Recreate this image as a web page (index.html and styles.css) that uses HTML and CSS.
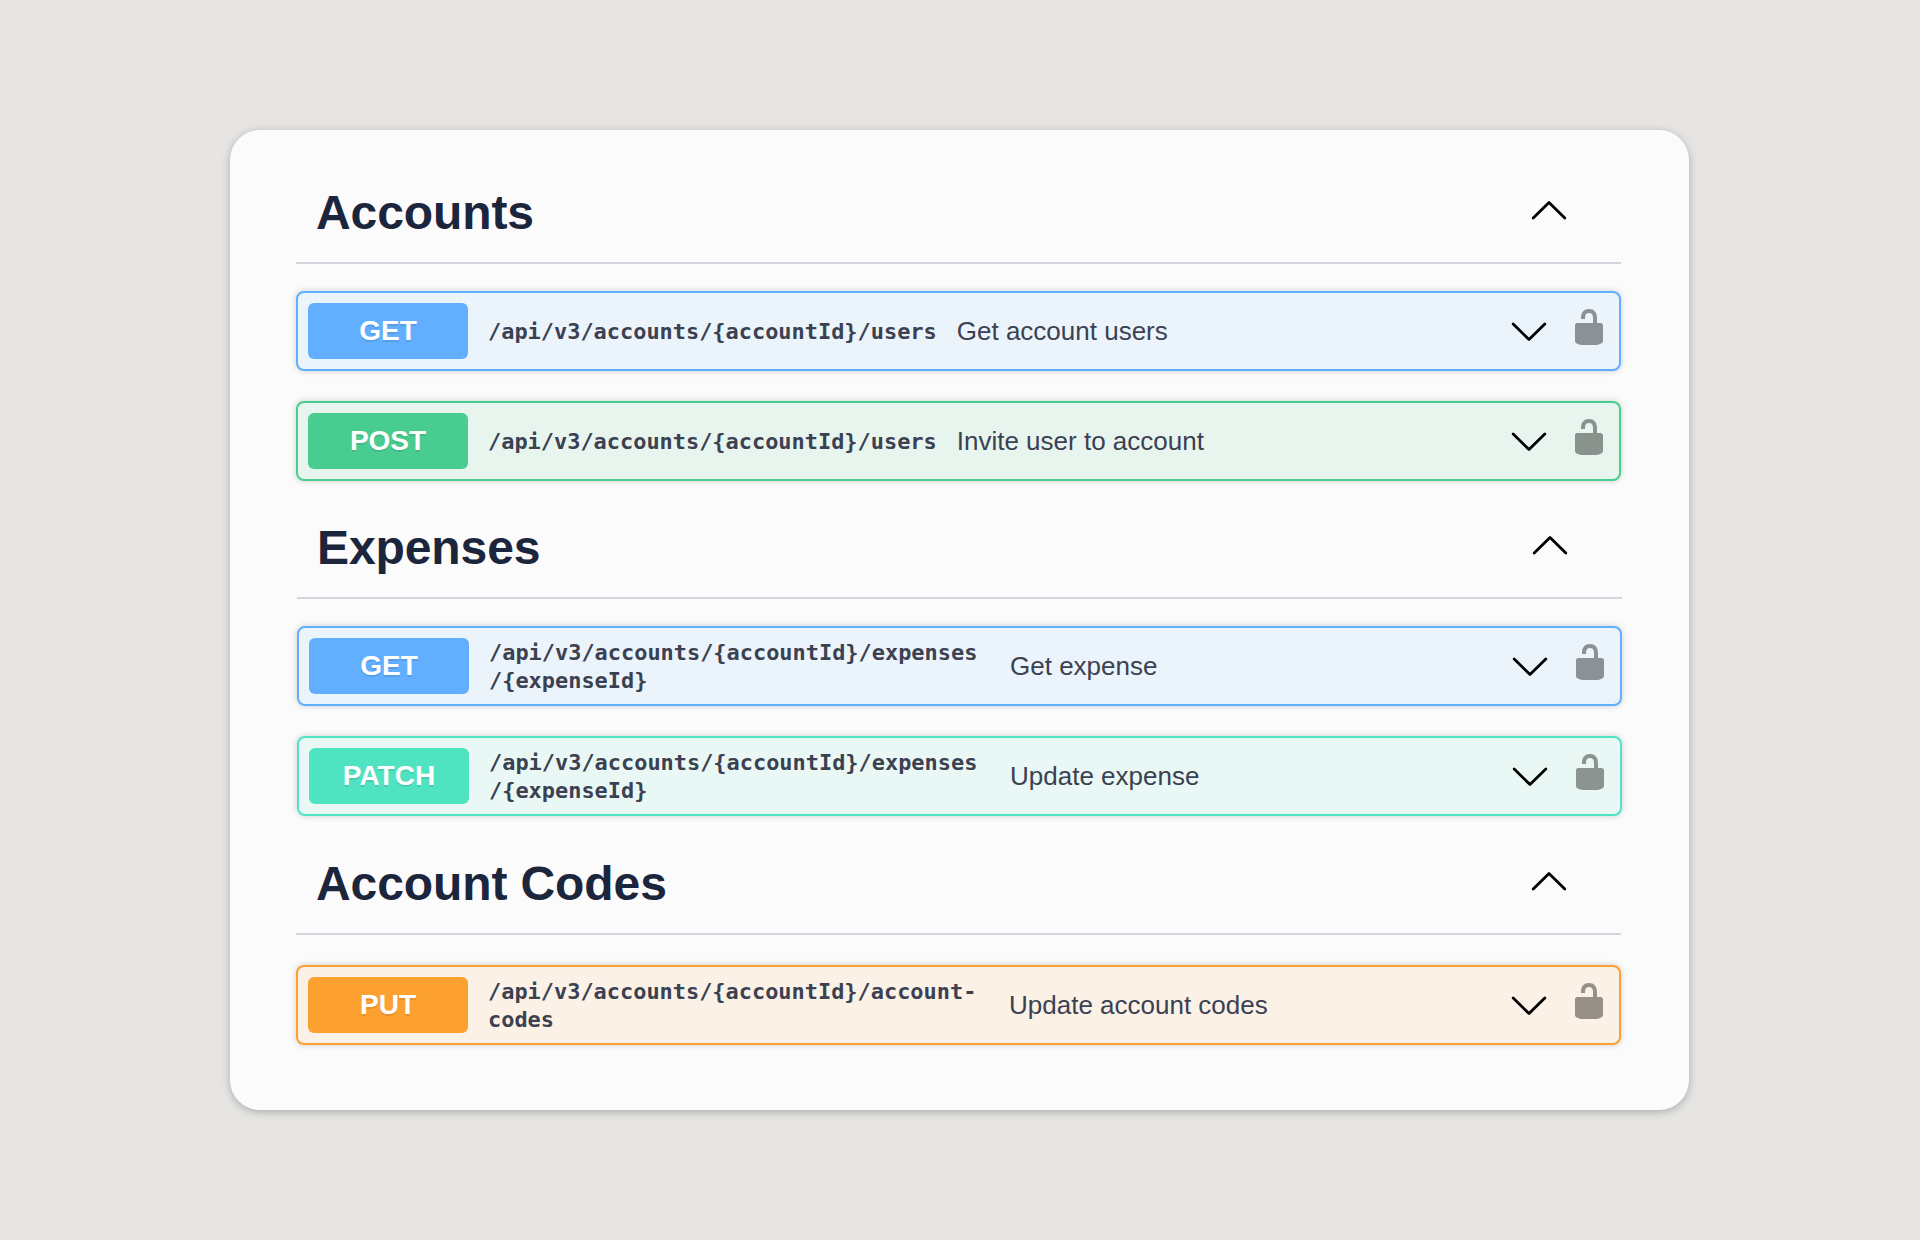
FILE: index.html
```
<!DOCTYPE html>
<html lang="en">
<head>
  <meta charset="UTF-8" />
  <meta name="viewport" content="width=device-width, initial-scale=1" />
  <title>API Reference</title>
  <link rel="stylesheet" href="styles.css">
</head>
<body>
  <!-- shared icons -->
  <svg class="icon-defs" width="0" height="0">
    <symbol id="arrow-up" viewBox="0 0 40 40">
      <path d="M4.2 28 L20 12.4 L35.8 28" fill="none" stroke="#000" stroke-width="2.8" stroke-linecap="round" stroke-linejoin="round" />
    </symbol>
    <symbol id="arrow-down" viewBox="0 0 40 40">
      <path d="M4.2 13 L20 28.6 L35.8 13" fill="none" stroke="#000" stroke-width="2.8" stroke-linecap="round" stroke-linejoin="round" />
    </symbol>
    <symbol id="unlocked" viewBox="0 0 20 20">
      <path d="M15.8 8H14V5.6C14 2.703 12.665 1 10 1 7.334 1 6 2.703 6 5.6V6h2v-.801C8 3.754 8.797 3 10 3c1.203 0 2 .754 2 2.199V8H4c-.553 0-1 .646-1 1.199V17c0 .549.428 1.139.951 1.307l1.197.387C5.672 18.861 6.55 19 7.1 19h5.8c.549 0 1.428-.139 1.951-.307l1.196-.387c.524-.167.953-.757.953-1.306V9.199C17 8.646 16.352 8 15.8 8z" />
    </symbol>
  </svg>

  <main class="card">
    <section class="tag">
      <div class="tag-header">
        <h2>Accounts</h2>
        <svg class="arrow"><use href="#arrow-up" /></svg>
      </div>
      <div class="operations">
        <div class="operation get">
          <span class="method">GET</span>
          <span class="path">/api/v3/accounts/{accountId}/users</span>
          <span class="summary">Get account users</span>
          <svg class="arrow"><use href="#arrow-down" /></svg>
          <svg class="lock"><use href="#unlocked" /></svg>
        </div>
        <div class="operation post">
          <span class="method">POST</span>
          <span class="path">/api/v3/accounts/{accountId}/users</span>
          <span class="summary">Invite user to account</span>
          <svg class="arrow"><use href="#arrow-down" /></svg>
          <svg class="lock"><use href="#unlocked" /></svg>
        </div>
      </div>
    </section>

    <section class="tag expenses">
      <div class="tag-header">
        <h2>Expenses</h2>
        <svg class="arrow"><use href="#arrow-up" /></svg>
      </div>
      <div class="operations">
        <div class="operation get">
          <span class="method">GET</span>
          <span class="path">/api/v3/accounts/{accountId}/expenses<wbr>/{expenseId}</span>
          <span class="summary">Get expense</span>
          <svg class="arrow"><use href="#arrow-down" /></svg>
          <svg class="lock"><use href="#unlocked" /></svg>
        </div>
        <div class="operation patch">
          <span class="method">PATCH</span>
          <span class="path">/api/v3/accounts/{accountId}/expenses<wbr>/{expenseId}</span>
          <span class="summary">Update expense</span>
          <svg class="arrow"><use href="#arrow-down" /></svg>
          <svg class="lock"><use href="#unlocked" /></svg>
        </div>
      </div>
    </section>

    <section class="tag account-codes">
      <div class="tag-header">
        <h2>Account Codes</h2>
        <svg class="arrow"><use href="#arrow-up" /></svg>
      </div>
      <div class="operations">
        <div class="operation put">
          <span class="method">PUT</span>
          <span class="path">/api/v3/accounts/{accountId}/account-<wbr>codes</span>
          <span class="summary">Update account codes</span>
          <svg class="arrow"><use href="#arrow-down" /></svg>
          <svg class="lock"><use href="#unlocked" /></svg>
        </div>
      </div>
    </section>
  </main>
</body>
</html>
```
FILE: styles.css
```
* {
  box-sizing: border-box;
}
body {
  margin: 0;
  padding: 130px 231px 130px 230px;
  min-height: 100vh;
  background: #e6e5e3;
  color: #3b4151;
  font-family: "Liberation Sans", Arial, sans-serif;
}
.icon-defs {
  display: none;
}
.card {
  height: 980px;
  padding: 35px 68px 0 66px;
  background: #fbfbfb;
  border-radius: 30px;
  box-shadow: 0 2px 8px rgba(0, 0, 0, 0.25);
}
.tag-header {
  display: flex;
  justify-content: space-between;
  height: 99px;
  padding: 20px 52px 0 20px;
  border-bottom: 2px solid #d2d5dc;
}
.tag-header h2 {
  margin: 0;
  font-size: 48px;
  line-height: 56px;
  letter-spacing: -0.1px;
  color: #1b253b;
}
.tag-header .arrow {
  margin-top: 5px;
}
.operations {
  display: flex;
  flex-direction: column;
  gap: 30px;
  padding-top: 27px;
}
.expenses {
  margin: 19px -1px 0 1px;
}
.account-codes {
  margin-top: 20px;
}
.account-codes .operations {
  padding-top: 30px;
}
.operation {
  display: flex;
  align-items: center;
  height: 80px;
  padding: 10px;
  border: 2px solid;
  border-radius: 8px;
  box-shadow: 0 0 6px rgba(0, 0, 0, 0.19);
}
.method {
  width: 160px;
  height: 56px;
  border-radius: 6px;
  color: #fff;
  font-size: 28px;
  font-weight: bold;
  line-height: 56px;
  text-align: center;
  text-shadow: 0 2px 0 rgba(0, 0, 0, 0.1);
}
.path {
  max-width: 501px;
  margin: 0 20px;
  padding-top: 2px;
  font-family: "DejaVu Sans Mono", monospace;
  font-size: 21.93px;
  font-weight: bold;
  line-height: 28px;
}
.summary {
  flex: 1;
  font-size: 26px;
}
.arrow,
.lock {
  flex: none;
  width: 40px;
  height: 40px;
}
.lock {
  margin: -8px 0 0 20px;
  fill: #000;
  opacity: 0.4;
}
.get {
  border-color: #61affe;
  background: #ebf3fb;
}
.get .method {
  background: #61affe;
}
.post {
  border-color: #49cc90;
  background: #e8f5ef;
}
.post .method {
  background: #49cc90;
}
.patch {
  border-color: #50e3c2;
  background: #e9f8f4;
}
.patch .method {
  background: #50e3c2;
}
.put {
  border-color: #fca130;
  background: #fbf1e6;
}
.put .method {
  background: #fca130;
}
```
